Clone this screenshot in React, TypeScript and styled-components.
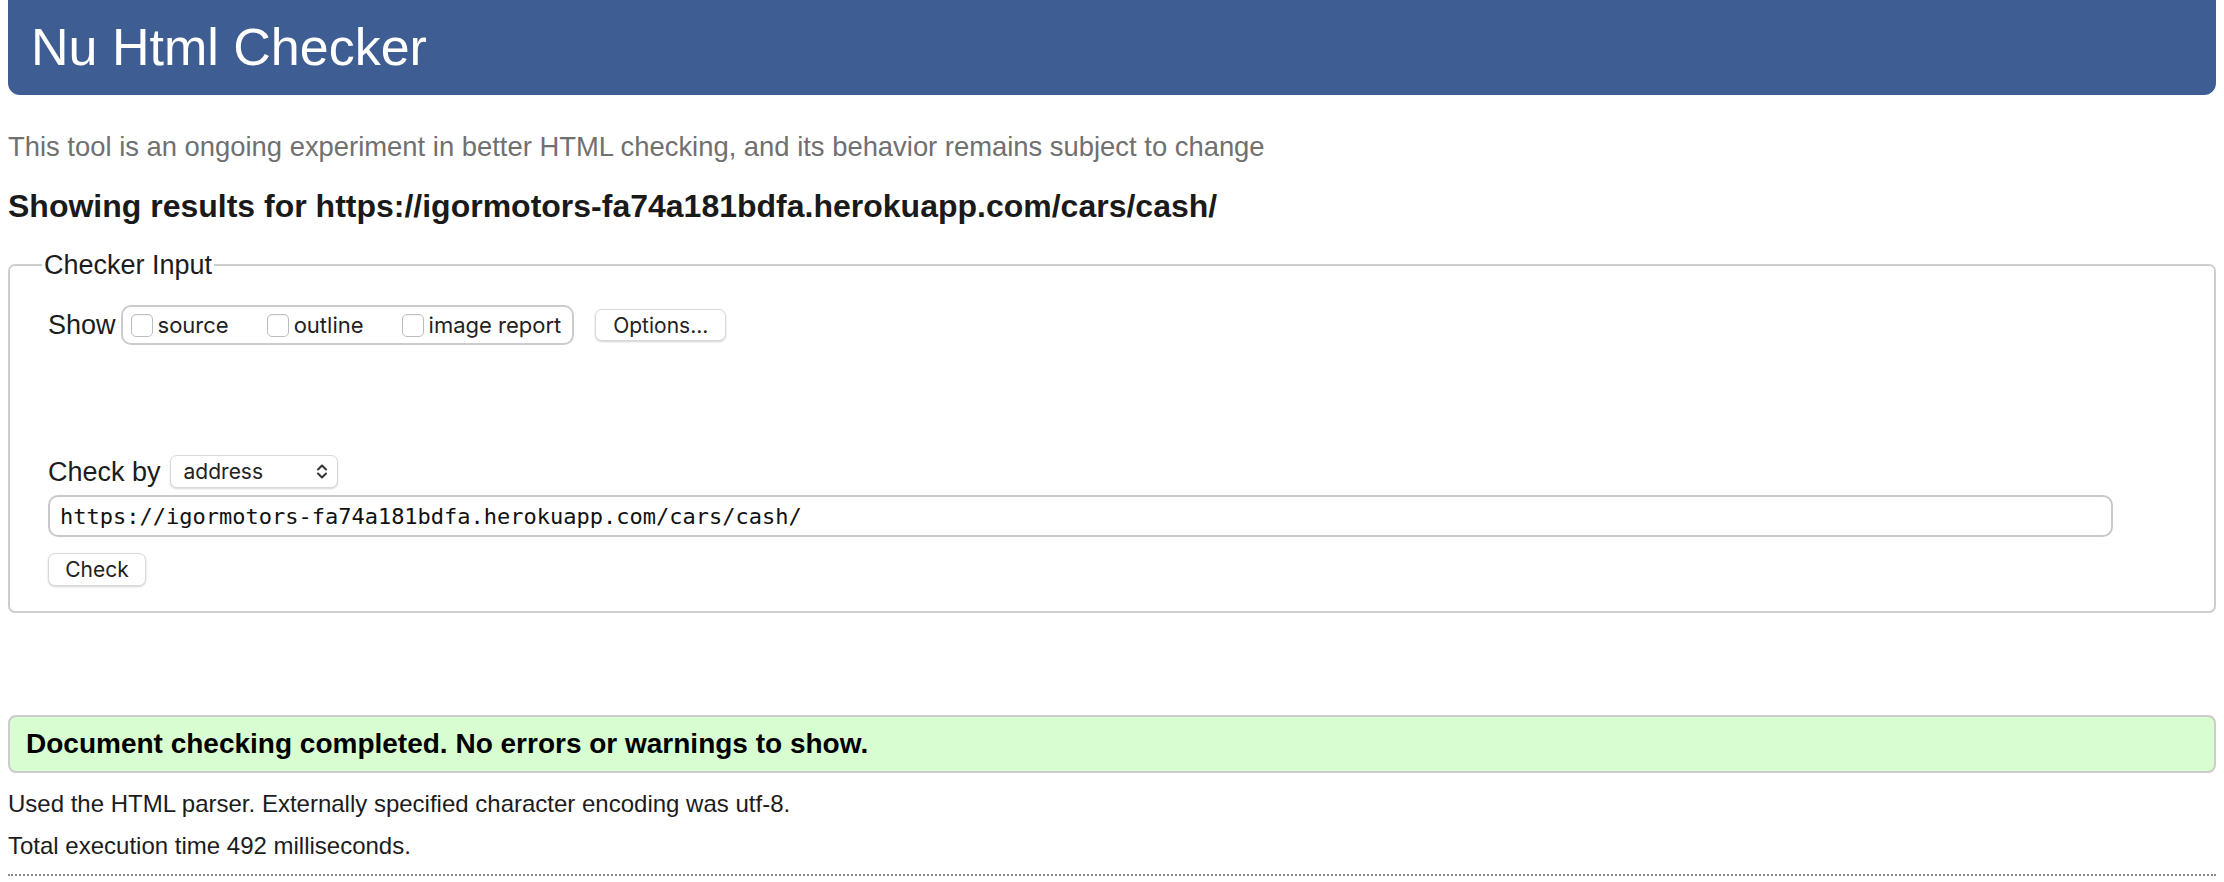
import React from "react";
import styled, { createGlobalStyle } from "styled-components";

const GlobalStyle = createGlobalStyle`
  html, body {
    margin: 0;
    padding: 0;
    background: #ffffff;
    font-family: "Liberation Sans", Arial, Helvetica, sans-serif;
    color: #1c1c1c;
  }
`;

const Page = styled.div`
  display: flex;
  flex-direction: column;
  padding: 0 8px;
`;

const Header = styled.header`
  height: 95px;
  background: #3e5d92;
  border-radius: 0 0 12px 12px;
  display: flex;
  align-items: center;
  padding-left: 23px;
`;

const Title = styled.h1`
  margin: 0;
  font-size: 52px;
  font-weight: 400;
  line-height: 95px;
  color: #ffffff;
`;

const Tagline = styled.p`
  margin: 36px 0 0;
  font-size: 27.4px;
  line-height: 32px;
  color: #707070;
`;

const ResultsFor = styled.h2`
  margin: 25px 0 0;
  font-size: 32px;
  line-height: 36px;
  font-weight: 700;
  color: #1a1a1a;
`;

const Fieldset = styled.fieldset`
  margin: 25px 0 0;
  padding: 24px 101px 25px 38px;
  border: 2px solid #cdcdcd;
  border-radius: 7px;
  display: flex;
  flex-direction: column;
  align-items: flex-start;
  min-width: 0;
`;

const Legend = styled.legend`
  margin-left: -6px;
  padding: 0 2px;
  font-size: 27px;
  line-height: 32px;
  color: #1c1c1c;
`;

const Row = styled.div<{ $top?: number }>`
  display: flex;
  align-items: center;
  margin-top: ${(p) => p.$top ?? 0}px;
`;

const Label = styled.span<{ $gap?: number }>`
  font-size: 27px;
  line-height: 32px;
  color: #1c1c1c;
  margin-right: ${(p) => p.$gap ?? 9}px;
`;

const Group = styled.div`
  display: flex;
  align-items: center;
  height: 36px;
  padding: 0 11px 0 8px;
  border: 2px solid #cccccc;
  border-radius: 10px;
  gap: 38px;
`;

const CheckItem = styled.label`
  display: flex;
  align-items: center;
  gap: 5px;
  font-family: Inter, "Open Sans", sans-serif;
  font-size: 22px;
  color: #222;
`;

const Box = styled.input.attrs({ type: "checkbox" })`
  appearance: none;
  margin: 0;
  width: 22px;
  height: 23px;
  border: 1px solid #bdbdbd;
  border-radius: 5px;
  background: #ffffff;
  box-shadow: inset 0 1px 1px rgba(0, 0, 0, 0.04);
`;

const Button = styled.button<{ $w: number }>`
  width: ${(p) => p.$w}px;
  height: 33px;
  padding: 0;
  border: 1px solid #d9d9d9;
  border-radius: 7px;
  background: #ffffff;
  box-shadow: 0 1px 2px rgba(0, 0, 0, 0.18);
  font-family: Inter, "Open Sans", sans-serif;
  font-size: 21px;
  color: #222;
`;

const OptionsButton = styled(Button)`
  margin-left: 21px;
  height: 32px;
`;

const SelectWrap = styled.div`
  position: relative;
  width: 168px;
  height: 33px;
`;

const Select = styled.select`
  appearance: none;
  width: 100%;
  height: 100%;
  margin: 0;
  padding: 0 0 0 13px;
  border: 1px solid #d9d9d9;
  border-radius: 7px;
  background: #ffffff;
  box-shadow: 0 1px 2px rgba(0, 0, 0, 0.16);
  font-family: Inter, "Open Sans", sans-serif;
  font-size: 21px;
  color: #222;
`;

const Chevrons = styled.svg`
  position: absolute;
  right: 10px;
  top: 8px;
  pointer-events: none;
`;

const UrlInput = styled.input`
  margin-top: 7px;
  width: 2065px;
  height: 42px;
  box-sizing: border-box;
  padding: 0 10px;
  border: 2px solid #c9c9c9;
  border-radius: 10px;
  font-family: "DejaVu Sans Mono", "Liberation Mono", monospace;
  font-size: 22px;
  color: #111;
  background: #ffffff;
`;

const CheckButton = styled(Button)`
  margin-top: 16px;
`;

const Success = styled.div`
  margin-top: 102px;
  height: 58px;
  box-sizing: border-box;
  display: flex;
  align-items: center;
  padding-left: 16px;
  background: #d7fdd1;
  border: 2px solid #cccccc;
  border-radius: 8px;
  font-size: 28px;
  font-weight: 700;
  color: #000;
`;

const Info = styled.p<{ $top: number }>`
  margin: ${(p) => p.$top}px 0 0;
  font-size: 24px;
  line-height: 28px;
  color: #1c1c1c;
`;

const Rule = styled.hr`
  margin: 14px 0 0;
  border: 0;
  border-top: 2px dotted #8a8a8a;
  height: 0;
`;

export default function App() {
  const url = "https://igormotors-fa74a181bdfa.herokuapp.com/cars/cash/";
  return (
    <>
      <GlobalStyle />
      <Page>
        <Header>
          <Title>Nu Html Checker</Title>
        </Header>
        <Tagline>
          This tool is an ongoing experiment in better HTML checking, and its behavior remains subject to change
        </Tagline>
        <ResultsFor>Showing results for {url}</ResultsFor>

        <Fieldset>
          <Legend>Checker Input</Legend>
          <Row>
            <Label $gap={5}>Show</Label>
            <Group>
              <CheckItem>
                <Box />
                source
              </CheckItem>
              <CheckItem>
                <Box />
                outline
              </CheckItem>
              <CheckItem>
                <Box />
                image report
              </CheckItem>
            </Group>
            <OptionsButton $w={131}>Options...</OptionsButton>
          </Row>

          <Row $top={110}>
            <Label>Check by</Label>
            <SelectWrap>
              <Select defaultValue="address">
                <option value="address">address</option>
                <option value="file">file upload</option>
                <option value="text">text input</option>
              </Select>
              <Chevrons width="12" height="17" viewBox="0 0 12 17">
                <path d="M2 6.5 L6 2.5 L10 6.5" fill="none" stroke="#333" strokeWidth="2" strokeLinecap="round" strokeLinejoin="round" />
                <path d="M2 10.5 L6 14.5 L10 10.5" fill="none" stroke="#333" strokeWidth="2" strokeLinecap="round" strokeLinejoin="round" />
              </Chevrons>
            </SelectWrap>
          </Row>

          <UrlInput readOnly value={url} />
          <CheckButton $w={98}>Check</CheckButton>
        </Fieldset>

        <Success>Document checking completed. No errors or warnings to show.</Success>
        <Info $top={17}>Used the HTML parser. Externally specified character encoding was utf-8.</Info>
        <Info $top={14}>Total execution time 492 milliseconds.</Info>
        <Rule />
      </Page>
    </>
  );
}
